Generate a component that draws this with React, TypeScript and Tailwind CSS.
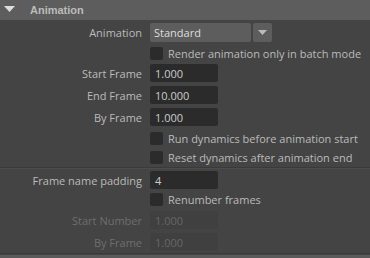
export default function App() {
  return (
    <div
      className="w-[370px] h-[258px] bg-[#444444] text-[11px] leading-none text-[#bbbbbb] overflow-hidden"
      style={{ fontFamily: '"Open Sans", "Liberation Sans", Arial, sans-serif' }}
    >
      {/* Section header */}
      <div className="h-[20px] bg-[#5d5d5d] flex items-center">
        <svg width="30" height="20" viewBox="0 0 30 20">
          <polygon points="4,6 15,6 9.5,12" fill="#dddddd" />
        </svg>
        <span
          className="font-bold text-[#bbbbbb]"
          style={{ fontFamily: '"Liberation Sans", Arial, sans-serif' }}
        >
          Animation
        </span>
      </div>

      <div className="pt-[3px] flex flex-col">
        <div className="flex items-center h-[19px]">
          <Label>Animation</Label>
          <div className="flex gap-[2px]">
            <div className="w-[101px] h-[19px] bg-[#5d5d5d] rounded-[2px] flex items-center pl-[4px] text-[#dddddd]">
              Standard
            </div>
            <div className="w-[19px] h-[19px] bg-[#5d5d5d] rounded-[2px] flex items-center justify-center">
              <svg width="9" height="5" viewBox="0 0 9 5">
                <polygon points="0,0 9,0 4.5,5" fill="#bbbbbb" />
              </svg>
            </div>
          </div>
        </div>

        <CheckRow className="mt-[5px]">Render animation only in batch mode</CheckRow>
        <FieldRow className="mt-[4px]" label="Start Frame" value="1.000" />
        <FieldRow className="mt-[4px]" label="End Frame" value="10.000" />
        <FieldRow className="mt-[4px]" label="By Frame" value="1.000" />
        <CheckRow className="mt-[6px]">Run dynamics before animation start</CheckRow>
        <CheckRow className="mt-[6px]">Reset dynamics after animation end</CheckRow>

        <div className="mt-[3px] h-[2px] border-t border-[#3a3a3a] border-b border-b-[#4c4c4c]" />

        <FieldRow className="mt-[2px]" label="Frame name padding" value="4" />
        <CheckRow className="mt-[4px]">Renumber frames</CheckRow>
        <FieldRow className="mt-[5px]" label="Start Number" value="1.000" disabled />
        <FieldRow className="mt-[4px]" label="By Frame" value="1.000" disabled />

        <div className="mt-[2px] h-[2px] border-t border-[#3a3a3a]" />
      </div>
      <div className="h-[4px] bg-[#5a5a5a]" />
    </div>
  );
}

function Label({ children, disabled }: { children: React.ReactNode; disabled?: boolean }) {
  return (
    <div
      className={
        "w-[142px] text-right mr-[8px] whitespace-nowrap " +
        (disabled ? "text-[#6e6e6e]" : "text-[#bbbbbb]")
      }
    >
      {children}
    </div>
  );
}

function FieldRow({
  label,
  value,
  disabled,
  className = "",
}: {
  label: string;
  value: string;
  disabled?: boolean;
  className?: string;
}) {
  return (
    <div className={"flex items-center h-[18px] " + className}>
      <Label disabled={disabled}>{label}</Label>
      <div
        className={
          "w-[68px] h-[18px] rounded-[2px] flex items-center pl-[5px] " +
          (disabled ? "bg-[#404040] text-[#666666]" : "bg-[#2b2b2b] text-[#cccccc]")
        }
      >
        {value}
      </div>
    </div>
  );
}

function CheckRow({ children, className = "" }: { children: React.ReactNode; className?: string }) {
  return (
    <div className={"flex items-center h-[13px] pl-[150px] " + className}>
      <div className="w-[13px] h-[13px] bg-[#2b2b2b] rounded-[2px] mr-[5px]" />
      <span className="whitespace-nowrap text-[#bbbbbb]">{children}</span>
    </div>
  );
}
